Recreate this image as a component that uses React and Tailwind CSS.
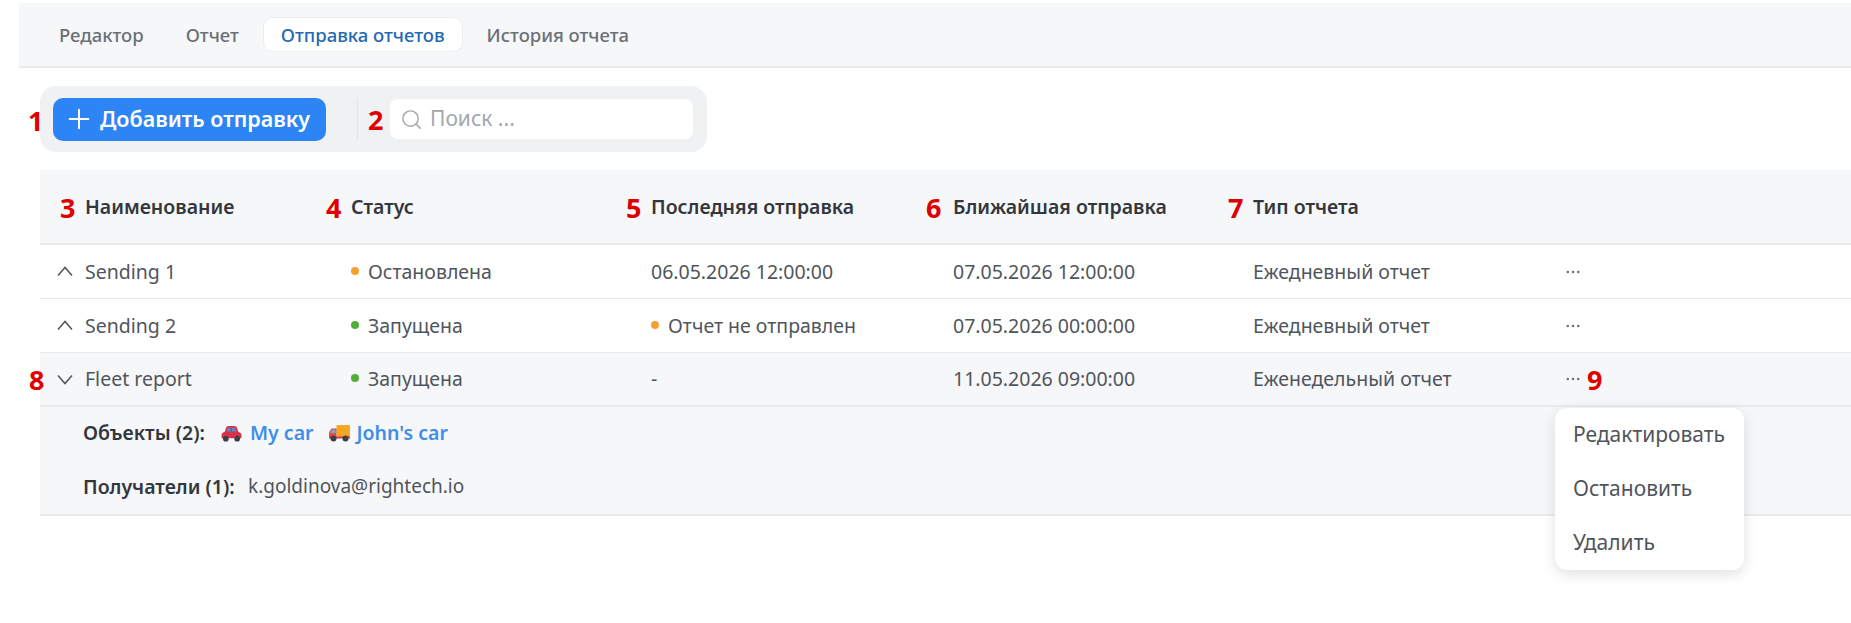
import { Ellipsis, Plus, Search } from 'lucide-react';

const rows = [
  { name: 'Sending 1', dot: 'bg-[#f5a031]', status: 'Остановлена', last: '06.05.2026 12:00:00', next: '07.05.2026 12:00:00', type: 'Ежедневный отчет' },
  { name: 'Sending 2', dot: 'bg-[#52ad3a]', status: 'Запущена', last: 'Отчет не отправлен', lastWarn: true, next: '07.05.2026 00:00:00', type: 'Ежедневный отчет' },
];

const gridCols = 'grid grid-cols-[311px_300px_302px_300px_311px_1fr] items-center';

function Mark({ children, className }) {
  return (
    <span className={`absolute top-1/2 -translate-y-1/2 text-[27px] leading-none font-bold text-[#e00000] ${className}`}>
      {children}
    </span>
  );
}

function Dot({ className }) {
  return <span className={`mr-[9px] inline-block size-[8px] -translate-y-[4px] rounded-full ${className}`} />;
}

function Chevron({ down }) {
  return (
    <svg width="16" height="11" viewBox="0 0 16 11" fill="none" stroke="#50555c" strokeWidth="1.500">
      <path d={down ? 'M1 1.500 8 9.500 15 1.500' : 'M1 9.500 8 1.500 15 9.500'} />
    </svg>
  );
}

function CarIcon() {
  return (
    <svg width="21" height="17" viewBox="0 0 22 18">
      <path d="M5 3.500Q5.500 1 8 1h6q2.500 0 3 2.500l1 3.500 2.500 1.500q1 .8 1 2v3.500H.5V10.500q0-1.200 1-2l2.500-1.500z" fill="#d8324a" />
      <path d="M6.800 2.800h3.400V7H5.600zM11.600 2.800h3.200L16 7h-4.400z" fill="#5a86c8" />
      <circle cx="5" cy="14.500" r="3" fill="#3a3f4a" />
      <circle cx="17" cy="14.500" r="3" fill="#3a3f4a" />
    </svg>
  );
}

function TruckIcon() {
  return (
    <svg width="23" height="18" viewBox="0 0 22 18">
      <rect x="8" y="1" width="13.500" height="12" rx="1" fill="#f5a623" />
      <path d="M.5 8.500 3 4.500h5V14H.5z" fill="#e0503a" />
      <path d="M3.500 5.700H7V9H1.800z" fill="#7aa6dc" />
      <rect x=".5" y="12.500" width="21" height="2" fill="#c9453a" />
      <circle cx="5" cy="14.500" r="3" fill="#3a3f4a" />
      <circle cx="17" cy="14.500" r="3" fill="#3a3f4a" />
    </svg>
  );
}

export default function App() {
  return (
    <div className="relative h-[623px] overflow-hidden bg-white pt-[3px] font-['Noto_Sans',sans-serif] text-[19.500px] text-[#50555c]">
      <nav className="ml-[19px] flex h-[65px] items-center border-b-2 border-[#e8eaec] bg-[#f6f7f9] pl-[19px] text-[18.500px] font-medium text-[#6b7076]">
        <span className="px-[21px]">Редактор</span>
        <span className="px-[21px]">Отчет</span>
        <span className="ml-[3px] flex h-[35px] items-center rounded-[10px] border border-[#eceef0] bg-white px-[17px] text-[#2369b3]">
          Отправка отчетов
        </span>
        <span className="px-[24px]">История отчета</span>
      </nav>

      <div className="mt-[18px] ml-[40px] flex h-[66px] w-[667px] items-center rounded-[16px] bg-[#f0f1f3] pl-[13px]">
        <button type="button" className="flex h-[43px] w-[273px] items-center gap-[5px] rounded-[10px] bg-[#2d85f5] pl-[10px] text-[21.500px] font-semibold text-white">
          <Plus size={32} strokeWidth={1.5} />
          Добавить отправку
        </button>
        <span className="ml-[31px] h-[42px] w-px bg-[#e2e4e7]" />
        <span className="ml-[10px] w-[22px] text-[27px] leading-none font-bold text-[#e00000]">2</span>
        <div className="flex h-[40px] w-[303px] items-center gap-[7px] rounded-[8px] bg-white pl-[10px] text-[21px] text-[#a3a7ad]">
          <Search size={23} strokeWidth={1.5} />
          Поиск ...
        </div>
      </div>
      <span className="absolute top-[107px] left-[28px] text-[27px] leading-none font-bold text-[#e00000]">1</span>

      <div className="mt-[18px] ml-[40px]">
        <div className={`${gridCols} h-[75px] border-b-2 border-[#e8eaec] bg-[#f6f7f9] font-semibold text-[#33373d]`}>
          <div className="relative pl-[45px]"><Mark className="left-[20px]">3</Mark>Наименование</div>
          <div className="relative"><Mark className="-left-[25px]">4</Mark>Статус</div>
          <div className="relative"><Mark className="-left-[25px]">5</Mark>Последняя отправка</div>
          <div className="relative"><Mark className="-left-[27px]">6</Mark>Ближайшая отправка</div>
          <div className="relative"><Mark className="-left-[25px]">7</Mark>Тип отчета</div>
        </div>

        {rows.map((row) => (
          <div key={row.name} className={`${gridCols} h-[54px] border-b border-[#e8eaec]`}>
            <div className="flex items-center gap-[12px] pl-[17px]">
              <Chevron />
              {row.name}
            </div>
            <div><Dot className={row.dot} />{row.status}</div>
            <div>{row.lastWarn && <Dot className="bg-[#f5a031]" />}{row.last}</div>
            <div>{row.next}</div>
            <div>{row.type}</div>
            <div><Ellipsis size={18} strokeWidth={1.5} color="#6b7076" /></div>
          </div>
        ))}

        <div className={`${gridCols} h-[54px] border-b-2 border-[#e8eaec] bg-[#f6f7f9]`}>
          <div className="relative flex items-center gap-[12px] pl-[17px]">
            <Mark className="-left-[11px]">8</Mark>
            <Chevron down />
            Fleet report
          </div>
          <div><Dot className="bg-[#52ad3a]" />Запущена</div>
          <div>-</div>
          <div>11.05.2026 09:00:00</div>
          <div>Еженедельный отчет</div>
          <div className="relative">
            <Ellipsis size={18} strokeWidth={1.5} color="#6b7076" />
            <Mark className="left-[23px]">9</Mark>
            <div className="absolute top-[38px] -left-[9px] z-10 w-[189px] rounded-[12px] bg-white text-[21px] shadow-[0_4px_14px_rgba(0,0,0,0.12)]">
              <div className="flex h-[54px] items-center px-[18px]">Редактировать</div>
              <div className="flex h-[54px] items-center px-[18px]">Остановить</div>
              <div className="flex h-[54px] items-center px-[18px]">Удалить</div>
            </div>
          </div>
        </div>

        <div className="flex h-[109px] flex-col border-b-2 border-[#e8eaec] bg-[#f6f7f9] pl-[43px]">
          <div className="flex h-[52px] items-center">
            <span className="w-[138px] font-semibold text-[#33373d]">Объекты (2):</span>
            <span className="flex items-center gap-[8px] font-semibold text-[#3f8fe8]">
              <CarIcon />My car
            </span>
            <span className="ml-[14px] flex items-center gap-[6px] font-semibold text-[#3f8fe8]">
              <TruckIcon />John's car
            </span>
          </div>
          <div className="flex h-[55px] items-center">
            <span className="w-[165px] font-semibold text-[#33373d]">Получатели (1):</span>
            <span className="text-[19px]">k.goldinova@rightech.io</span>
          </div>
        </div>
      </div>
    </div>
  );
}
